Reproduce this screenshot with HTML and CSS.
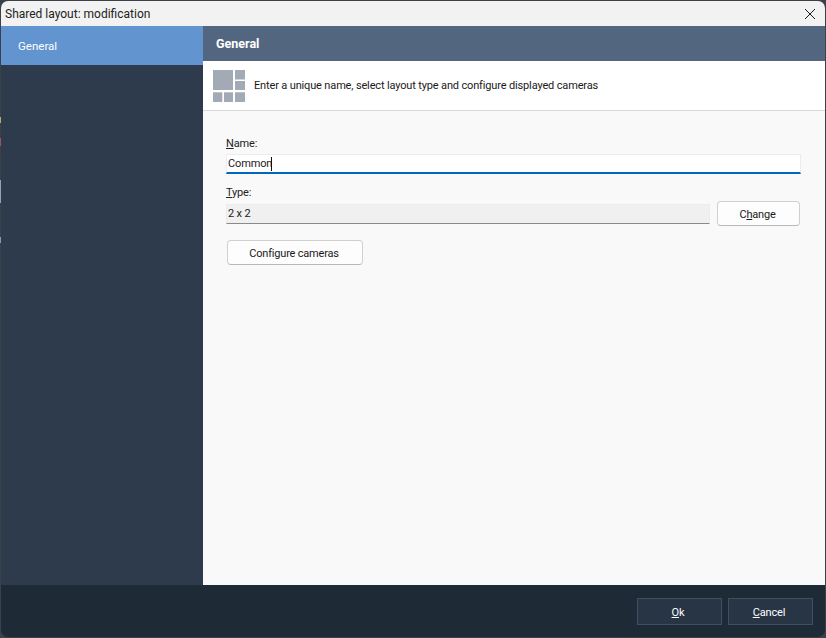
FILE: index.html
```html
<!DOCTYPE html>
<html lang="en">
<head>
<meta charset="utf-8">
<title>Shared layout: modification</title>
<link rel="stylesheet" href="styles.css">
</head>
<body>
<div class="window">
  <div class="titlebar">
    <span class="title">Shared layout: modification</span>
    <svg class="close" width="12" height="12" viewBox="0 0 12 12"><path d="M1 1L11 11M11 1L1 11" stroke="#1a1a1a" stroke-width="1" fill="none"/></svg>
  </div>
  <div class="main">
    <nav class="sidebar">
      <div class="nav-item">General</div>
    </nav>
    <section class="content">
      <div class="section-head">General</div>
      <div class="info">
        <svg class="info-icon" width="32" height="32" viewBox="0 0 32 32">
          <g fill="#a2abb5">
            <rect x="0" y="0" width="20" height="20"/>
            <rect x="22" y="0" width="10" height="9.5"/>
            <rect x="22" y="11" width="10" height="9"/>
            <rect x="0" y="22.3" width="9.3" height="9.7"/>
            <rect x="11" y="22.3" width="9" height="9.7"/>
            <rect x="22" y="22.3" width="10" height="9.7"/>
          </g>
        </svg>
        <span>Enter a unique name, select layout type and configure displayed cameras</span>
      </div>
      <div class="form">
        <label class="label"><u>N</u>ame:</label>
        <div class="name-input"><span>Common</span><i class="caret"></i></div>
        <label class="label type-label"><u>T</u>ype:</label>
        <div class="type-row">
          <div class="type-value">2 x 2</div>
          <button class="btn change">C<u>h</u>ange</button>
        </div>
        <button class="btn configure">Configure cameras</button>
      </div>
    </section>
  </div>
  <footer class="footer">
    <button class="dark-btn"><u>O</u>k</button>
    <button class="dark-btn"><u>C</u>ancel</button>
  </footer>
</div>
</body>
</html>
```

FILE: styles.css
```css
* { box-sizing: border-box; }
html, body { margin: 0; height: 100%; }
body {
  background-color: #3b4148;
  background-image: linear-gradient(to bottom,
    transparent 117px, #b5a878 117px, #b5a878 123px,
    transparent 123px, transparent 138px, #a0525c 138px, #a0525c 146px,
    transparent 146px, transparent 180px, #9aa2ae 180px, #9aa2ae 203px,
    transparent 203px, transparent 237px, #7f9cc4 237px, #7f9cc4 243px,
    transparent 243px);
  background-size: 1px 100%;
  background-repeat: no-repeat;
  font-family: Roboto, "Liberation Sans", sans-serif;
  font-size: 11px;
  letter-spacing: -0.15px;
  color: #1a1a1a;
  padding: 1px;
  overflow: hidden;
}
.window {
  height: 636px;
  display: flex;
  flex-direction: column;
  border-radius: 7px;
  overflow: hidden;
}
.titlebar {
  height: 25px;
  flex: none;
  background: #f2f2f2;
  display: flex;
  align-items: center;
  justify-content: space-between;
  padding: 0 9px 0 4px;
}
.title { font-size: 12px; letter-spacing: 0; color: #222; }
.main { flex: 1; display: flex; min-height: 0; }
.sidebar { width: 202px; flex: none; background: #2e3b4c; }
.nav-item {
  height: 39px;
  background: #6294d0;
  color: #fff;
  display: flex;
  align-items: center;
  padding-left: 17px;
  font-size: 11.5px;
  letter-spacing: 0;
}
.content { flex: 1; background: #f9f9f9; display: flex; flex-direction: column; }
.section-head {
  height: 35px;
  flex: none;
  background: #536680;
  color: #fff;
  font-weight: 700;
  font-size: 12.5px;
  letter-spacing: 0;
  display: flex;
  align-items: center;
  padding-left: 13px;
}
.info {
  height: 50px;
  flex: none;
  background: #fff;
  border-bottom: 1px solid #d9d9d9;
  display: flex;
  align-items: center;
  gap: 9px;
  padding-left: 10px;
}
.form { padding: 25px 24px 0 23px; display: flex; flex-direction: column; align-items: flex-start; }
.label { line-height: 16px; color: #222; }
.name-input {
  margin-top: 2px;
  width: 100%;
  height: 20px;
  background: #fff;
  border: 1px solid #ececec;
  border-bottom: 2px solid #0067c0;
  padding-left: 1px;
  display: flex;
  align-items: center;
}
.caret { display: inline-block; width: 1px; height: 14px; background: #111; margin-left: -1px; }
.type-label { margin-top: 11px; }
.type-row { width: 100%; display: flex; gap: 7px; align-items: center; padding-right: 1px; }
.type-value {
  flex: 1;
  height: 20px;
  background: #f0f0f0;
  border: 1px solid #ececec;
  border-bottom: 1px solid #8a8a8a;
  padding-left: 1px;
  display: flex;
  align-items: center;
}
.btn {
  font: inherit;
  letter-spacing: -0.2px;
  color: #1a1a1a;
  background: #fdfdfd;
  border: 1px solid #d0d0d0;
  border-bottom-color: #b8b8b8;
  border-radius: 4px;
  padding: 1px 2px 0 0;
}
.change { width: 83px; height: 25px; flex: none; }
.configure { width: 136px; height: 25px; margin-top: 14px; margin-left: 1px; }
.footer {
  height: 52px;
  flex: none;
  background: #1f2a37;
  display: flex;
  justify-content: flex-end;
  align-items: flex-start;
  gap: 6px;
  padding: 13px 12px 0 0;
}
.dark-btn {
  width: 85px;
  height: 27px;
  background: #283545;
  border: 1px solid #3f4f63;
  color: #fff;
  font: inherit;
  letter-spacing: inherit;
  padding: 1px 3px 0 0;
}
```
